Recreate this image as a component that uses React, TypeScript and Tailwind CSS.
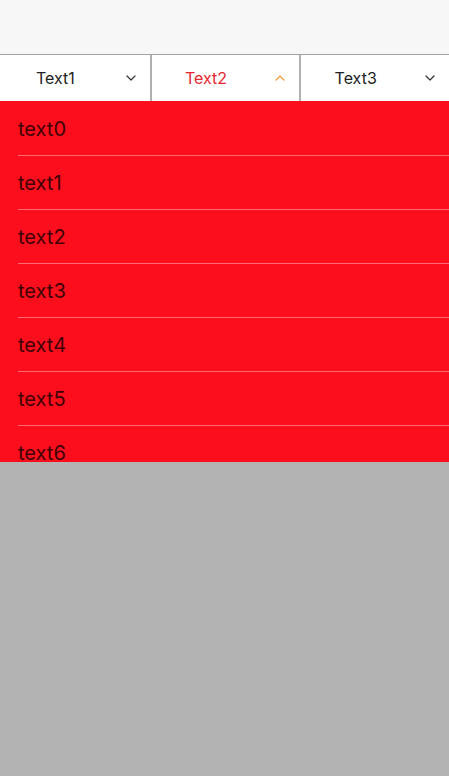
import { ChevronDown, ChevronUp } from 'lucide-react';

const tabs = [
  { label: 'Text1', active: false },
  { label: 'Text2', active: true },
  { label: 'Text3', active: false },
];

const items = ['text0', 'text1', 'text2', 'text3', 'text4', 'text5', 'text6', 'text7'];

export default function App() {
  return (
    <div className="flex h-[776px] w-[449px] flex-col overflow-hidden bg-[#b3b3b3]" style={{ fontFamily: 'Inter, "Noto Sans", sans-serif' }}>
      <div className="h-[54px] shrink-0 bg-[#f7f7f7]" />
      <div className="grid h-[47px] shrink-0 grid-cols-3 border-t border-[#a3a3a3] bg-white">
        {tabs.map((t, i) => (
          <div key={t.label} className={`flex items-center ${i > 0 ? 'border-l-2 border-[#b0b0b0]' : ''}`}>
            <span className={`flex-1 pr-[12px] text-center text-[16px] ${t.active ? 'text-[#e5262f]' : 'text-[#222]'}`}>{t.label}</span>
            {t.active ? (
              <ChevronUp size={16} strokeWidth={1.8} className="mr-[11px] text-[#f2994a]" />
            ) : (
              <ChevronDown size={16} strokeWidth={1.8} className="mr-[11px] text-[#333]" />
            )}
          </div>
        ))}
      </div>
      <div className="h-[361px] shrink-0 overflow-hidden bg-[#fc0e1c] pt-[1px]">
        {items.map((it) => (
          <div key={it} className="pl-[18px]">
            <div className="flex h-[54px] items-center border-b border-[#ff6a72] pt-[1px] text-[20px] text-[#3f0205]">{it}</div>
          </div>
        ))}
      </div>
    </div>
  );
}
